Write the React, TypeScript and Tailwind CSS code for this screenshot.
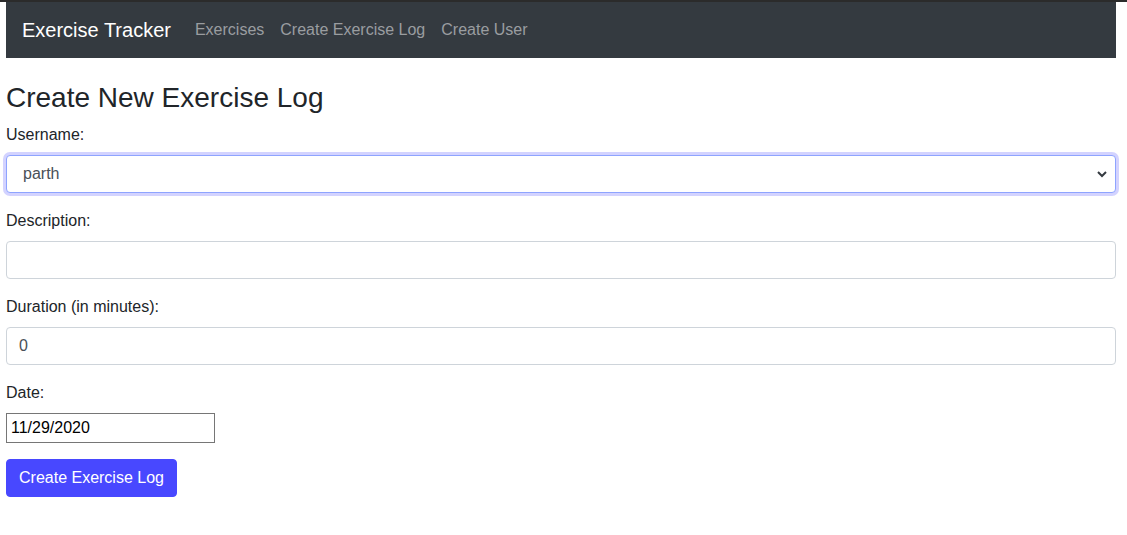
export default function App() {
  const links = ["Exercises", "Create Exercise Log", "Create User"];

  return (
    <div className="min-h-[535px] bg-white font-['Liberation_Sans',Arial,sans-serif] text-[#212529]">
      <div className="h-[2px] bg-[#2b2b2b]" />
      <div className="px-[6px] w-[1122px]">
        <nav className="flex h-[56px] items-center bg-[#343a40] px-4">
          <span className="mr-4 text-[20px] leading-[30px] text-white">Exercise Tracker</span>
          <div className="flex">
            {links.map((l) => (
              <span key={l} className="px-2 text-[16px] leading-6 text-[#9a9da0]">
                {l}
              </span>
            ))}
          </div>
        </nav>

        <h3 className="mt-[23px] mb-2 text-[28px] leading-[33.6px]">Create New Exercise Log</h3>

        <form>
          <div className="mb-4">
            <label className="mb-2 block text-[16px] leading-6">Username:</label>
            <div className="relative">
              <select
                defaultValue="parth"
                className="block h-[38px] w-full appearance-none rounded-[4px] border border-[#8ea4ff] bg-white pl-4 pr-8 text-[16px] text-[#495057] shadow-[0_0_0_3px_rgba(110,110,255,0.3)] outline-none"
              >
                <option>parth</option>
              </select>
              <svg
                className="pointer-events-none absolute right-[9px] top-[15px]"
                width="10"
                height="8"
                viewBox="0 0 10 8"
              >
                <path d="M1 2l4 4 4-4" fill="none" stroke="#343a40" strokeWidth="2" />
              </svg>
            </div>
          </div>

          <div className="mb-4">
            <label className="mb-2 block text-[16px] leading-6">Description:</label>
            <input
              type="text"
              className="block h-[38px] w-full rounded-[4px] border border-[#ced4da] px-3 text-[16px] text-[#495057] outline-none"
            />
          </div>

          <div className="mb-4">
            <label className="mb-2 block text-[16px] leading-6">Duration (in minutes):</label>
            <input
              type="text"
              defaultValue="0"
              className="block h-[38px] w-full rounded-[4px] border border-[#ced4da] px-3 text-[16px] text-[#495057] outline-none"
            />
          </div>

          <div className="mb-4">
            <label className="mb-2 block text-[16px] leading-6">Date:</label>
            <input
              type="text"
              defaultValue="11/29/2020"
              className="block h-[30px] w-[209px] border border-[#767676] px-[4px] text-[16px] text-black outline-none"
            />
          </div>

          <button
            type="button"
            className="h-[38px] rounded-[4px] border border-[#4848ff] bg-[#4848ff] px-3 text-[16px] leading-6 text-white"
          >
            Create Exercise Log
          </button>
        </form>
      </div>
    </div>
  );
}
